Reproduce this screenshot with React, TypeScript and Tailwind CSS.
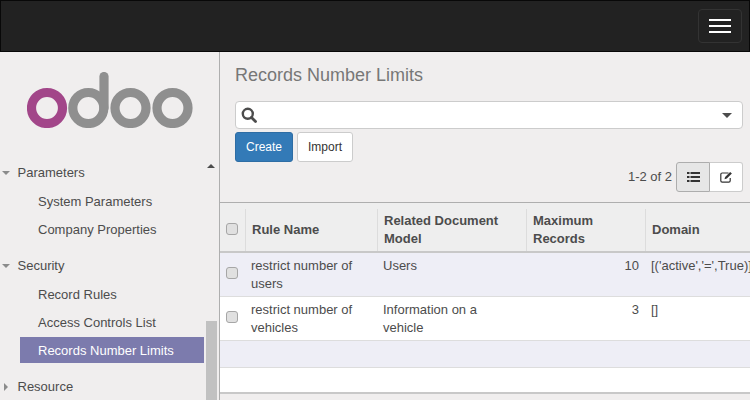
import React from "react";

function Logo() {
  return (
    <svg width="170" height="56" viewBox="0 0 170 56" className="block">
      <g fill="none" strokeWidth="9.2">
        <circle cx="20" cy="36" r="15.5" stroke="#a24689" />
        <circle cx="61.3" cy="36" r="15.5" stroke="#8f8f8f" />
        <path d="M77 36V4.500" stroke="#8f8f8f" strokeLinecap="round" />
        <circle cx="103.500" cy="36" r="15.500" stroke="#8f8f8f" />
        <circle cx="145.500" cy="36" r="15.500" stroke="#8f8f8f" />
      </g>
    </svg>
  );
}

function Tri({ dir }: { dir: "down" | "right" }) {
  return dir === "down" ? (
    <span className="w-0 h-0 border-x-[4px] border-x-transparent border-t-[4px] border-t-[#8b8b8b]" />
  ) : (
    <span className="w-0 h-0 ml-[2px] border-y-[4px] border-y-transparent border-l-[4px] border-l-[#8b8b8b]" />
  );
}

function Group({ label, dir, className }: { label: string; dir: "down" | "right"; className?: string }) {
  return (
    <div className={"flex items-center h-[20px] text-[13px] text-[#4c4c4c] pl-[2px] " + (className ?? "")}>
      <span className="w-[15.5px] flex items-center">
        <Tri dir={dir} />
      </span>
      <span>{label}</span>
    </div>
  );
}

function Item({ label, active }: { label: string; active?: boolean }) {
  return (
    <div
      className={
        "flex items-center h-[26px] pl-[18px] ml-[20px] w-[184px] text-[13px] " +
        (active ? "-mt-[1px] mb-[3px] pt-[2px] bg-[#7c7bad] text-white" : "mb-[2px] text-[#4c4c4c]")
      }
    >
      {label}
    </div>
  );
}

function Check() {
  return <span className="block w-[12px] h-[12px] rounded-[3px] bg-[#e0e0e0] border border-[#a6a6a6]" />;
}

const cellText = "align-top px-[6px] pt-[4px] text-[13px] leading-[18px] text-[#4c4c4c]";

function Th({ children, w }: { children?: React.ReactNode; w: number }) {
  return (
    <th style={{ width: w }} className="relative p-0 text-left align-middle">
      <div className="h-[42px] mt-[6px] border-l border-[#dcdcdc] pl-[6px] flex items-center text-[13px] leading-[18px] font-bold text-[#4c4c4c]">
        <span>{children}</span>
      </div>
    </th>
  );
}

export default function App() {
  return (
    <div className="w-[750px] h-[400px] overflow-hidden flex flex-col bg-[#f0eeee] font-['Liberation_Sans',Arial,sans-serif]">
      <header className="h-[52px] shrink-0 bg-[#222222] border border-[#080808] flex items-center justify-end pr-[7px]">
        <button className="w-[44px] h-[34px] rounded-[4px] border border-[#333333] flex flex-col items-center justify-center gap-[4px]">
          <span className="block w-[22px] h-[2px] bg-white" />
          <span className="block w-[22px] h-[2px] bg-white" />
          <span className="block w-[22px] h-[2px] bg-white" />
        </button>
      </header>
      <div className="flex flex-1 min-h-0">
        <aside className="relative w-[220px] shrink-0 border-r border-[#aeaeae] overflow-hidden">
          <div className="pl-[27px] pt-[20px]">
            <Logo />
          </div>
          <div className="mt-[35px]">
            <Group label="Parameters" dir="down" />
            <div className="mt-[6px]">
              <Item label="System Parameters" />
              <Item label="Company Properties" />
            </div>
            <Group label="Security" dir="down" className="mt-[13px]" />
            <div className="mt-[6px]">
              <Item label="Record Rules" />
              <Item label="Access Controls List" />
              <Item label="Records Number Limits" active />
            </div>
            <Group label="Resource" dir="right" className="mt-[14px]" />
          </div>
          <span className="absolute left-[207px] top-[112px] w-0 h-0 border-x-[4px] border-x-transparent border-b-[4px] border-b-[#4c4c4c]" />
          <div className="absolute left-[206px] top-[269px] w-[11px] h-[79px] bg-[#c1c1c1]" />
        </aside>
        <main className="flex-1 min-w-0 overflow-hidden">
          <div className="pl-[15px] pr-[7px] h-[151px] border-b border-[#aeaeae]">
            <h1 className="pt-[12px] text-[18px] leading-[22px] text-[#777777] font-normal">Records Number Limits</h1>
            <div className="mt-[15px] h-[28px] bg-white border border-[#cccccc] rounded-[4px] flex items-center justify-between pl-[5px] pr-[5px]">
              <svg width="16" height="16" viewBox="0 0 16 16" fill="none" stroke="#4c4c4c">
                <circle cx="6.800" cy="6.800" r="5" strokeWidth="2.400" />
                <path d="M10.500 10.500l4 4" strokeWidth="2.800" strokeLinecap="round" />
              </svg>
              <span className="mr-[5px] w-0 h-0 border-x-[5px] border-x-transparent border-t-[5px] border-t-[#4c4c4c]" />
            </div>
            <div className="flex gap-[4px] mt-[3px]">
              <button className="h-[30px] w-[58px] rounded-[3px] bg-[#337ab7] border border-[#2e6da4] text-white text-[12px]">Create</button>
              <button className="h-[30px] w-[56px] rounded-[3px] bg-white border border-[#cccccc] text-[#333333] text-[12px]">Import</button>
            </div>
            <div className="flex items-center justify-end">
              <span className="text-[13px] text-[#4c4c4c] mr-[4px]">1-2 of 2</span>
              <div className="flex h-[30px]">
                <span className="w-[34px] bg-[#e6e6e6] border border-[#adadad] rounded-l-[3px] flex items-center justify-center">
                  <svg width="13" height="10" viewBox="0 0 13 10" fill="#333333">
                    <rect x="0" y="0" width="2.500" height="2" />
                    <rect x="3.500" y="0" width="9.500" height="2" />
                    <rect x="0" y="4" width="2.500" height="2" />
                    <rect x="3.500" y="4" width="9.500" height="2" />
                    <rect x="0" y="8" width="2.500" height="2" />
                    <rect x="3.500" y="8" width="9.500" height="2" />
                  </svg>
                </span>
                <span className="w-[33px] bg-white border border-l-0 border-[#cccccc] rounded-r-[3px] flex items-center justify-center">
                  <svg width="13" height="12" viewBox="0 0 13 12" fill="none" stroke="#333333">
                    <path d="M8.500 2H2.200a1.400 1.400 0 0 0-1.400 1.400v6.400a1.400 1.400 0 0 0 1.400 1.400h6.600A1.400 1.400 0 0 0 10.200 9.800V7" strokeWidth="1.200" />
                    <path d="M4.500 8.200l.6-2.300 5-5 1.800 1.700-5 5z" fill="#333333" stroke="none" />
                  </svg>
                </span>
              </div>
            </div>
          </div>
          <table className="table-fixed border-collapse w-[530px]">
            <thead>
              <tr className="h-[49px] bg-[#eeeeee] border-b-2 border-[#c8c8c8]">
                <th className="w-[25px] p-0 align-middle">
                  <div className="flex justify-center pt-[4px] pr-[1px]"><Check /></div>
                </th>
                <Th w={132}>Rule Name</Th>
                <Th w={149}>Related Document Model</Th>
                <Th w={119}>Maximum Records</Th>
                <Th w={105}>Domain</Th>
              </tr>
            </thead>
            <tbody>
              <tr className="h-[44px] bg-[#eeeef6] border-b border-[#dddddd]">
                <td className="p-0 align-middle"><div className="flex justify-center pr-[1px] pb-[2px]"><Check /></div></td>
                <td className={cellText}>restrict number of users</td>
                <td className={cellText}>Users</td>
                <td className={cellText + " text-right"}>10</td>
                <td className={cellText + " whitespace-nowrap"}>[('active','=',True)]</td>
              </tr>
              <tr className="h-[44px] bg-white border-b border-[#dddddd]">
                <td className="p-0 align-middle"><div className="flex justify-center pr-[1px] pb-[2px]"><Check /></div></td>
                <td className={cellText}>restrict number of vehicles</td>
                <td className={cellText}>Information on a vehicle</td>
                <td className={cellText + " text-right"}>3</td>
                <td className={cellText}>[]</td>
              </tr>
              <tr className="h-[27px] bg-[#eeeef6] border-b border-[#dddddd]"><td colSpan={5} /></tr>
              <tr className="h-[26px] bg-white border-b-2 border-[#c8c8c8]"><td colSpan={5} /></tr>
            </tbody>
          </table>
        </main>
      </div>
    </div>
  );
}
